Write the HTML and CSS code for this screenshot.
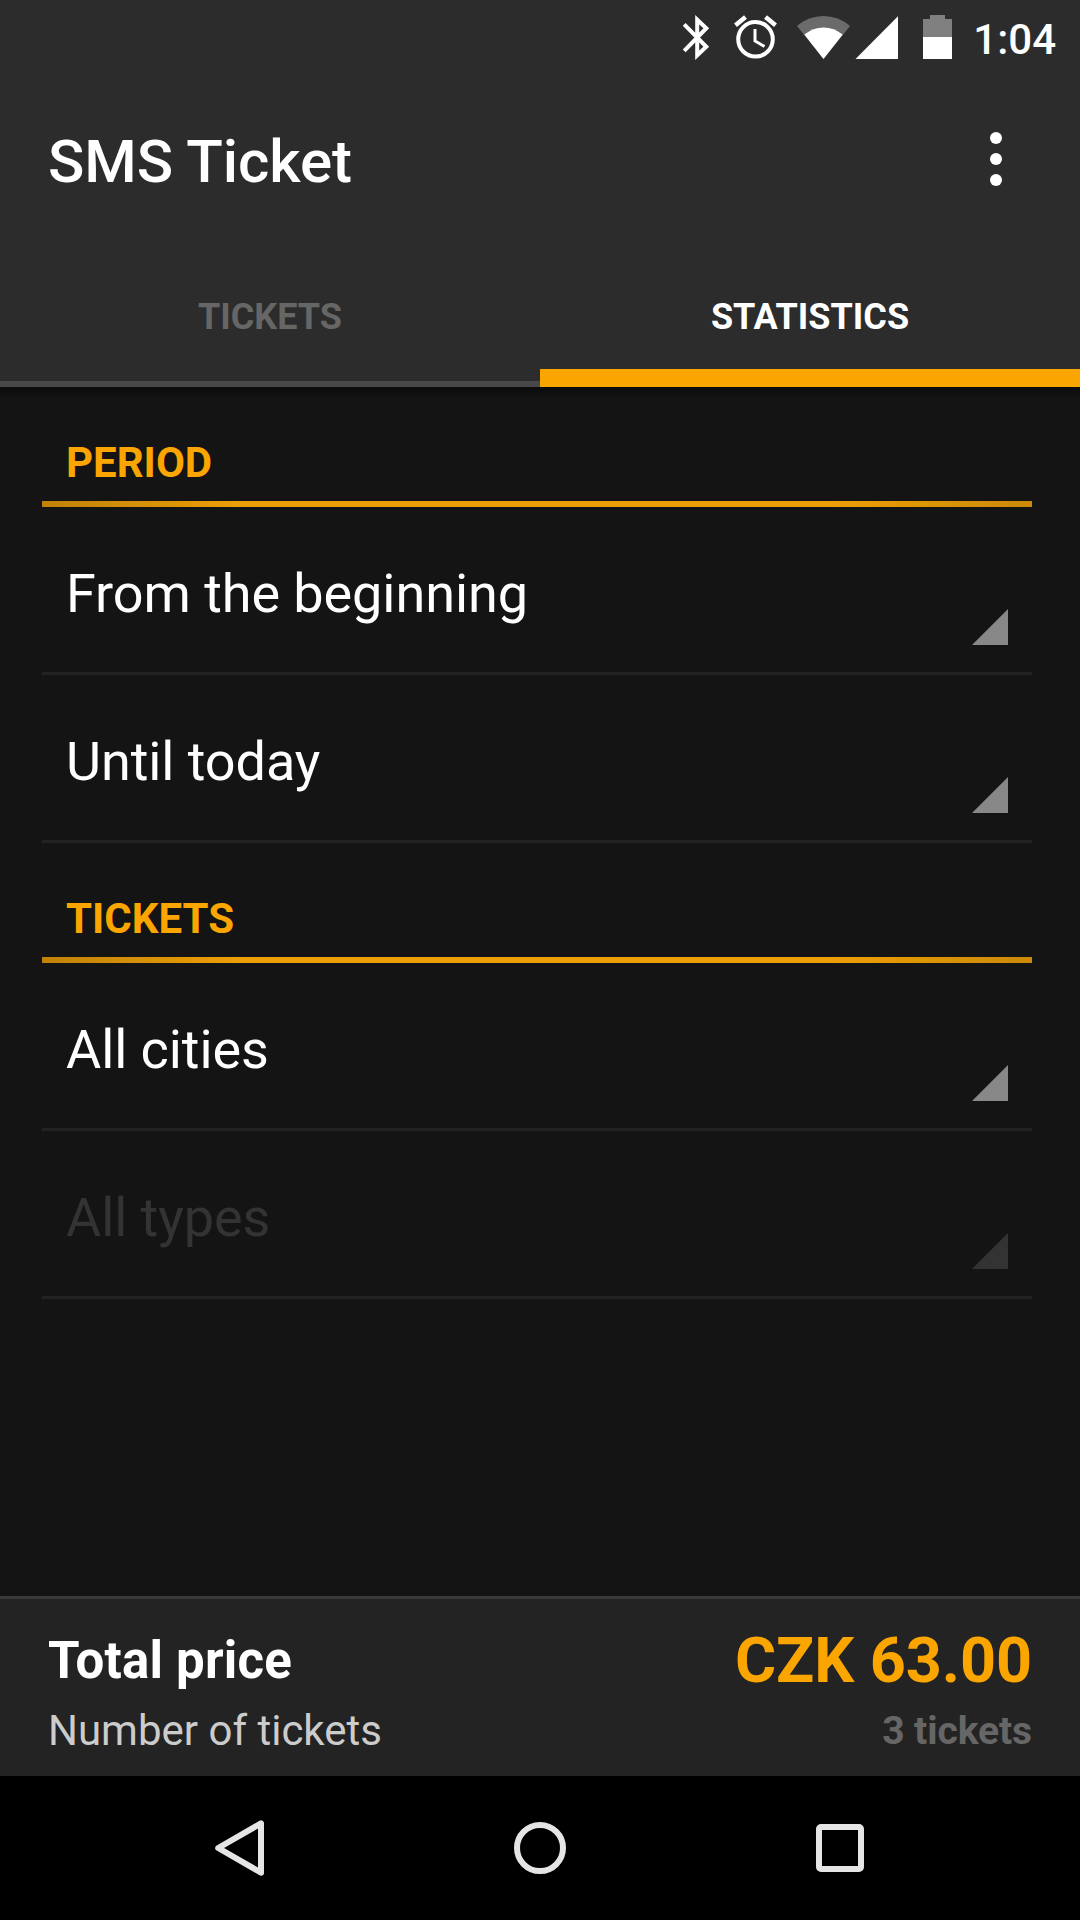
FILE: index.html
```html
<!DOCTYPE html>
<html lang="en">
<head>
<meta charset="utf-8">
<title>SMS Ticket</title>
<link rel="stylesheet" href="styles.css">
</head>
<body>
<div class="screen">
  <header class="header">
    <div class="status">
      <svg class="status-icons" width="272" height="72" viewBox="680 0 272 72">
        <path class="bluetooth" d="M684.2 24.4L706.3 46.8L697.2 55.3V19.7L706.3 28.2L684.2 50.8"/>
        <g class="alarm">
          <circle cx="755.5" cy="39.3" r="17.3"/>
          <path class="hands" d="M755 29V41L764.5 46.5"/>
          <path class="bells" d="M735.5 25.2L745.5 17M775.5 25.2L765.5 17"/>
        </g>
        <path class="dim" d="M823.5 59L797 26Q808.500 16 823.5 16T850 26Z"/>
        <path class="solid" d="M823.5 59L804.300 34.500Q813 27.400 823.500 27.400T842.700 34.500Z"/>
        <path class="solid" d="M855.500 59L898 16.300V59Z"/>
        <path class="battery" d="M923 37V19H930V15H945V19H952V37Z"/>
        <path class="solid" d="M923 37H952V59H923Z"/>
      </svg>
      <span class="clock">1:04</span>
    </div>
    <div class="appbar">
      <h1 class="title">SMS Ticket</h1>
      <svg class="more" width="12" height="54" viewBox="0 0 12 54">
        <circle cx="6" cy="6" r="6"/><circle cx="6" cy="27" r="6"/><circle cx="6" cy="48" r="6"/>
      </svg>
    </div>
    <nav class="tabs">
      <div class="tab">TICKETS</div>
      <div class="tab active">STATISTICS</div>
    </nav>
  </header>
  <main class="content">
    <section>
      <h2 class="heading">PERIOD</h2>
      <div class="row"><span>From the beginning</span><i class="corner"></i></div>
      <div class="row"><span>Until today</span><i class="corner"></i></div>
    </section>
    <section>
      <h2 class="heading">TICKETS</h2>
      <div class="row"><span>All cities</span><i class="corner"></i></div>
      <div class="row disabled"><span>All types</span><i class="corner"></i></div>
    </section>
  </main>
  <footer class="summary">
    <div class="line"><span class="total">Total price</span><span class="price">CZK 63.00</span></div>
    <div class="line"><span class="label">Number of tickets</span><span class="count">3 tickets</span></div>
  </footer>
  <div class="navbar">
    <svg width="60" height="60" viewBox="210 1818 60 60"><path d="M261 1823.300V1872.700L218.200 1848Z"/></svg>
    <svg width="60" height="60" viewBox="0 0 60 60"><circle cx="30" cy="30" r="23"/></svg>
    <svg width="60" height="60" viewBox="0 0 60 60"><rect x="9" y="9" width="42" height="42" rx="2"/></svg>
  </div>
</div>
</body>
</html>
```
FILE: styles.css
```css
* { box-sizing: border-box; }
body { margin: 0; background: #000; font-family: Roboto, sans-serif; color: #fff; }
.screen { width: 1080px; height: 1920px; display: flex; flex-direction: column; background: #141414; }

.header { height: 387px; background: #2c2c2c; display: flex; flex-direction: column; }
.status { height: 72px; display: flex; justify-content: flex-end; padding-right: 24px; }
.status-icons { margin-right: 21px; fill: none; stroke: none; }
.clock { font-size: 42px; font-weight: 500; line-height: 79px; }
.bluetooth { stroke: #fff; stroke-width: 4; }
.alarm { stroke: #fff; stroke-width: 4; }
.alarm .hands { stroke-width: 3; }
.alarm .bells { stroke-width: 4.500; }
.solid { fill: #fff; }
.dim { fill: #6b6b6b; }
.battery { fill: #808080; }

.appbar { height: 171px; display: flex; justify-content: space-between; padding: 0 78px 0 48px; }
.title { margin: 0; font-size: 60px; font-weight: 500; line-height: 179px; white-space: nowrap; letter-spacing: -0.08px; }
.more { margin-top: 60px; fill: #fff; }

.tabs { height: 144px; display: grid; grid-template-columns: 1fr 1fr; }
.tab { border-bottom: 6px solid #484848; text-align: center; font-size: 36px; font-weight: 700; line-height: 149px; height: 144px; color: #666; }
.tab.active { border-bottom: 18px solid #faa500; color: #fff; }

.content { flex: 1; padding: 0 48px 0 42px; background: linear-gradient(#0b0b0b, #141414 12px); }
.heading { margin: 0; height: 120px; padding: 51px 24px 0; font-size: 42px; line-height: 49px; font-weight: 700; color: #faa500; border-bottom: 6px solid; border-image: linear-gradient(90deg, #c08206, #ec9e02 20%, #ec9e02 80%, #cb8905) 1; }
.row { height: 168px; padding: 54px 24px 27px; border-bottom: 3px solid #222; display: flex; justify-content: space-between; font-size: 54px; line-height: 65px; letter-spacing: -0.07px; }
.corner { width: 36px; height: 36px; align-self: flex-end; background: #888; clip-path: polygon(100% 0, 100% 100%, 0 100%); }
.disabled { color: #333; }
.disabled .corner { background: #333; }

.summary { height: 180px; padding: 25px 48px 0; background: #232323; border-top: 3px solid #3a3a3a; }
.line { display: flex; justify-content: space-between; height: 71px; line-height: 71px; }
.total { font-size: 51px; font-weight: 700; line-height: 73px; letter-spacing: 0.2px; }
.price { font-size: 63px; font-weight: 700; color: #faa500; line-height: 73px; letter-spacing: -0.1px; }
.label { font-size: 42px; color: #ccc; }
.count { font-size: 39px; font-weight: 700; color: #666; line-height: 73px; letter-spacing: -0.1px; }

.navbar { height: 144px; background: #000; display: flex; justify-content: center; align-items: center; gap: 240px; }
.navbar svg { fill: none; stroke: #e5e5e5; stroke-width: 6; stroke-linejoin: round; }
```
